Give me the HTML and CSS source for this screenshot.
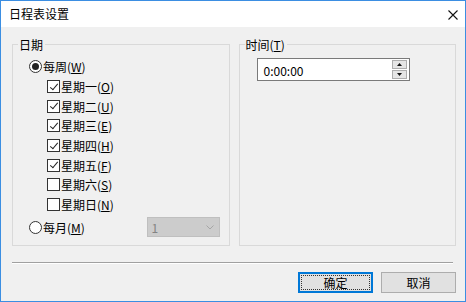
FILE: index.html
```html
<!DOCTYPE html>
<html>
<head>
<meta charset="utf-8">
<link rel="stylesheet" href="styles.css">
</head>
<body>
<div class="window">
  <div class="titlebar">
    <span class="title">日程表设置</span>
    <svg class="close" width="10" height="10" viewBox="0 0 10 10"><path d="M0.5 0.5 L9.5 9.5 M9.5 0.5 L0.5 9.5" stroke="#111" stroke-width="1.1" fill="none"/></svg>
  </div>
  <div class="content">
    <div class="groups">
      <div class="group group-date">
        <span class="legend">日期</span>
        <div class="row"><span class="radio checked"></span><span class="lbl">每周(<u>W</u>)</span></div>
        <div class="row sub"><span class="check on"></span><span class="lbl">星期一(<u>O</u>)</span></div>
        <div class="row sub"><span class="check on"></span><span class="lbl">星期二(<u>U</u>)</span></div>
        <div class="row sub"><span class="check on"></span><span class="lbl">星期三(<u>E</u>)</span></div>
        <div class="row sub"><span class="check on"></span><span class="lbl">星期四(<u>H</u>)</span></div>
        <div class="row sub"><span class="check on"></span><span class="lbl">星期五(<u>F</u>)</span></div>
        <div class="row sub"><span class="check"></span><span class="lbl">星期六(<u>S</u>)</span></div>
        <div class="row sub"><span class="check"></span><span class="lbl">星期日(<u>N</u>)</span></div>
        <div class="row month"><span class="radio"></span><span class="lbl">每月(<u>M</u>)</span>
          <div class="combo"><span class="combo-val">1</span><svg width="8" height="5" viewBox="0 0 8 5"><path d="M0.5 0.5 L4 4 L7.5 0.5" stroke="#a6a6a6" fill="none"/></svg></div>
        </div>
      </div>
      <div class="group group-time">
        <span class="legend">时间(<u>T</u>)</span>
        <div class="timebox">
          <span class="time">0:00:00</span>
          <div class="spin">
            <div class="spin-btn"><svg width="5" height="3" viewBox="0 0 5 3"><path d="M2.5 0 L5 3 L0 3 Z" fill="#111"/></svg></div>
            <div class="spin-btn"><svg width="5" height="3" viewBox="0 0 5 3"><path d="M0 0 L5 0 L2.5 3 Z" fill="#111"/></svg></div>
          </div>
        </div>
      </div>
    </div>
    <div class="separator"></div>
    <div class="buttons">
      <div class="btn default"><span class="focus">确定</span></div>
      <div class="btn">取消</div>
    </div>
  </div>
</div>
</body>
</html>
```
FILE: styles.css
```css
html, body {
  margin: 0;
  padding: 0;
}
body {
  width: 466px;
  height: 302px;
  font-family: "Noto Sans CJK SC", "Noto Sans", sans-serif;
  font-size: 12px;
  color: #000;
}
.window {
  box-sizing: border-box;
  width: 466px;
  height: 302px;
  border: 1px solid #3b8ee2;
  display: flex;
  flex-direction: column;
  background: #f0f0f0;
}
.titlebar {
  height: 26px;
  background: #fff;
  display: flex;
  align-items: center;
  padding-left: 8px;
  padding-right: 7px;
  justify-content: space-between;
}
.title {
  font-size: 12px;
  line-height: 14px;
  color: #000;
  margin-top: 0px;
}
.close {
  display: block;
  margin-top: 1px;
}
.content {
  flex: 1;
  padding: 17px 9px 0 11px;
}
.groups {
  display: flex;
  gap: 9px;
}
.group {
  position: relative;
  box-sizing: border-box;
  width: 218px;
  height: 202px;
  border: 1px solid #d9d9d9;
}
.legend {
  position: absolute;
  left: 5px;
  top: -8px;
  line-height: 15px;
  padding: 0 2px 0 1px;
  background: #f0f0f0;
}
u {
  text-decoration: underline;
  text-underline-offset: 1px;
}
.group-date {
  padding: 12px 9px 0 16px;
  display: flex;
  flex-direction: column;
}
.row {
  display: flex;
  align-items: center;
  height: 19.7px;
  flex: none;
}
.row.sub {
  padding-left: 18px;
}
.row.month {
  height: 21px;
  margin-top: 2px;
}
.lbl {
  line-height: 15px;
}
.radio {
  box-sizing: border-box;
  width: 13px;
  height: 13px;
  border: 1px solid #333;
  border-radius: 50%;
  background: #fff;
  margin-right: 1px;
  display: flex;
  align-items: center;
  justify-content: center;
  flex: none;
}
.radio.checked::after {
  content: "";
  width: 7px;
  height: 7px;
  border-radius: 50%;
  background: #222;
}
.check {
  box-sizing: border-box;
  width: 13px;
  height: 13px;
  border: 1px solid #333;
  background: #fff;
  margin-right: 1px;
  flex: none;
  position: relative;
}
.check.on::after {
  content: "";
  position: absolute;
  left: 3.5px;
  top: 0.5px;
  width: 3px;
  height: 7px;
  border-right: 1.2px solid #222;
  border-bottom: 1.2px solid #222;
  transform: rotate(40deg);
}
.combo {
  margin-left: auto;
  box-sizing: border-box;
  width: 73px;
  height: 20px;
  background: #cccccc;
  border: 1px solid #bfbfbf;
  display: flex;
  align-items: center;
  justify-content: space-between;
  padding: 0 5px 0 4px;
}
.combo-val {
  color: #838383;
  line-height: 15px;
}
.combo svg {
  display: block;
}
.group-time {
  padding: 13px 0 0 17px;
}
.timebox {
  box-sizing: border-box;
  width: 153px;
  height: 23px;
  border: 1px solid #7a7a7a;
  background: #fff;
  display: flex;
  align-items: center;
  justify-content: space-between;
  padding: 0 1px 0 6px;
}
.time {
  line-height: 15px;
  margin-top: 1px;
}
.spin {
  box-sizing: border-box;
  width: 15px;
  height: 19px;
  display: flex;
  flex-direction: column;
  gap: 1px;
  margin-right: 1px;
}
.spin-btn {
  flex: 1;
  box-sizing: border-box;
  border: 1px solid #adadad;
  background: #e5e5e5;
  display: flex;
  align-items: center;
  justify-content: center;
}
.spin-btn svg {
  display: block;
}
.separator {
  margin-top: 16px;
  width: 441px;
  height: 0;
  border-top: 1px solid #a0a0a0;
  border-bottom: 1px solid #fff;
}
.buttons {
  display: flex;
  justify-content: flex-end;
  gap: 8px;
  margin-top: 8px;
}
.btn {
  box-sizing: border-box;
  width: 75px;
  height: 21px;
  border: 1px solid #adadad;
  background: #e1e1e1;
  display: flex;
  align-items: center;
  justify-content: center;
  line-height: 15px;
}
.btn.default {
  border: 2px solid #0078d7;
  padding: 1px;
}
.btn .focus {
  flex: 1;
  align-self: stretch;
  border: 1px dotted #333;
  display: flex;
  align-items: center;
  justify-content: center;
}
```
